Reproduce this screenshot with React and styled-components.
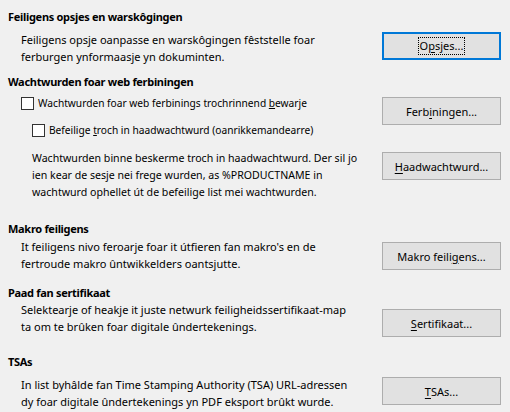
import styled, { createGlobalStyle } from "styled-components";

const GlobalStyle = createGlobalStyle`
  body {
    margin: 0;
    background: #f0f0f0;
    font-family: "Noto Sans", "Open Sans", sans-serif;
    font-size: 11px;
    color: #000;
  }
`;

function App() {
  return (
    <>
      <GlobalStyle />
      <STPage>
        <STSection>
          <STHeading>Feiligens opsjes en warskôgingen</STHeading>
          <STRow $top={6}>
            <STText>
              <span>Feiligens opsje oanpasse en warskôgingen fêststelle foar</span>
              <span>ferburgen ynformaasje yn dokuminten.</span>
            </STText>
            <STButton $top={1} $focused>
              <STFocus>
                O<u>p</u>sjes...
              </STFocus>
            </STButton>
          </STRow>
        </STSection>

        <STSection $top={8}>
          <STHeading>Wachtwurden foar web ferbiningen</STHeading>
          <STRow $top={5}>
            <STChecks>
              <STCheckRow>
                <STBox />
                <span>
                  Wachtwurden foar web ferbinings trochrinnend <u>b</u>ewarje
                </span>
              </STCheckRow>
              <STCheckRow $indent={11} $top={10}>
                <STBox />
                <span>
                  Befeilige <u>t</u>roch in haadwachtwurd (oanrikkemandearre)
                </span>
              </STCheckRow>
            </STChecks>
            <STButton $top={2}>
              Ferb<u>i</u>ningen...
            </STButton>
          </STRow>
          <STRow $top={11} $indent={24}>
            <STText $size={10.6}>
              <span>Wachtwurden binne beskerme troch in haadwachtwurd. Der sil jo</span>
              <span>ien kear de sesje nei frege wurden, as %PRODUCTNAME in</span>
              <span>wachtwurd ophellet út de befeilige list mei wachtwurden.</span>
            </STText>
            <STButton $top={2}>
              <u>H</u>aadwachtwurd...
            </STButton>
          </STRow>
        </STSection>

        <STSection $top={19}>
          <STHeading>Makro feiligens</STHeading>
          <STRow $top={1}>
            <STText>
              <span>It feiligens nivo feroarje foar it útfieren fan makro's en de</span>
              <span>fertroude makro ûntwikkelders oantsjutte.</span>
            </STText>
            <STButton $top={4}>
              Makro feili<u>g</u>ens...
            </STButton>
          </STRow>
        </STSection>

        <STSection $top={12}>
          <STHeading>Paad fan sertifikaat</STHeading>
          <STRow>
            <STText>
              <span>Selektearje of heakje it juste netwurk feiligheidssertifikaat-map</span>
              <span>ta om te brûken foar digitale ûndertekenings.</span>
            </STText>
            <STButton $top={8}>
              <u>S</u>ertifikaat...
            </STButton>
          </STRow>
        </STSection>

        <STSection $top={16}>
          <STHeading>TSAs</STHeading>
          <STRow $top={6}>
            <STText>
              <span>In list byhâlde fan Time Stamping Authority (TSA) URL-adressen</span>
              <span>dy foar digitale ûndertekenings yn PDF eksport brûkt wurde.</span>
            </STText>
            <STButton $top={1}>
              <u>T</u>SAs...
            </STButton>
          </STRow>
        </STSection>
      </STPage>
    </>
  );
}

const STPage = styled.div`
  padding: 8px 9px 0 8px;
  display: flex;
  flex-direction: column;
`;

const STSection = styled.section`
  display: flex;
  flex-direction: column;
  margin-top: ${(p) => p.$top || 0}px;
`;

const STHeading = styled.div`
  font-weight: 700;
  line-height: 17px;
  letter-spacing: -0.3px;
  white-space: nowrap;
`;

const STRow = styled.div`
  display: flex;
  justify-content: space-between;
  align-items: flex-start;
  margin-top: ${(p) => p.$top || 0}px;
  padding-left: ${(p) => p.$indent || 13}px;
`;

const STText = styled.div`
  display: flex;
  flex-direction: column;
  line-height: 17px;
  white-space: nowrap;
  font-size: ${(p) => p.$size || 11}px;
`;

const STChecks = styled.div`
  display: flex;
  flex-direction: column;
`;

const STCheckRow = styled.label`
  display: flex;
  align-items: center;
  gap: 4px;
  font-size: 10.2px;
  line-height: 17px;
  white-space: nowrap;
  margin-top: ${(p) => p.$top || 0}px;
  padding-left: ${(p) => p.$indent || 0}px;
`;

const STBox = styled.span`
  width: 11px;
  height: 11px;
  border: 1px solid #333;
  background: #fff;
  flex: none;
`;

const STButton = styled.button`
  flex: none;
  width: 119px;
  height: 28px;
  margin-top: ${(p) => p.$top || 0}px;
  padding: 0;
  display: flex;
  align-items: center;
  justify-content: center;
  font: inherit;
  color: #000;
  background: #e1e1e1;
  border: ${(p) => (p.$focused ? "2px solid #0078d7" : "1px solid #adadad")};
  u {
    text-decoration-thickness: 1px;
    text-underline-offset: 2px;
  }
`;

const STFocus = styled.span`
  padding: 0 1px;
  line-height: 16px;
  outline: 1px dotted #000;
`;

export default App;
